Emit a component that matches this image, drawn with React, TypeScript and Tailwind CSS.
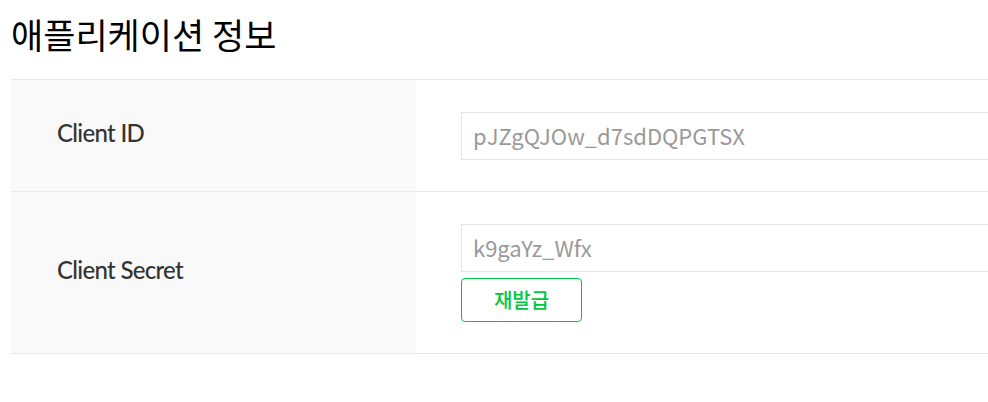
const kr = { fontFamily: '"Noto Sans CJK KR", "Noto Sans", sans-serif' };
const lato = { fontFamily: 'Lato, "Noto Sans CJK KR", sans-serif' };

interface FieldRowProps {
  label: string;
  value: string;
  action?: string;
}

function FieldRow({ label, value, action }: FieldRowProps) {
  return (
    <div className="flex border-b border-[#e8e8e8]">
      <div className="flex w-[405px] shrink-0 items-center bg-[#f9f9f9] pb-[5px] pl-[46px]">
        <span className="text-[24px] font-medium tracking-[-0.7px] text-[#333]" style={lato}>
          {label}
        </span>
      </div>
      <div className="flex-1 pt-8 pb-[31px] pl-[45px]">
        <div className="flex h-12 items-center border border-[#e5e5e5] bg-white pb-[2px] pl-[11px]">
          <span className="text-[22px] text-[#999]" style={kr}>
            {value}
          </span>
        </div>
        {action ? (
          <button
            type="button"
            className="mt-[6px] flex h-[44px] w-[121px] items-center justify-center rounded-[4px] border border-[#00c73c] bg-white text-[20px] font-medium text-[#00c73c]"
            style={kr}
          >
            {action}
          </button>
        ) : null}
      </div>
    </div>
  );
}

export default function App() {
  return (
    <div className="h-[402px] w-[988px] overflow-hidden bg-white">
      <div className="w-[1200px] pl-[11px]">
        <h2 className="pt-[11px] text-[35px] leading-[46px] text-black" style={kr}>
          애플리케이션 정보
        </h2>
        <div className="mt-[22px] border-t border-[#e8e8e8]">
          <FieldRow label="Client ID" value="pJZgQJOw_d7sdDQPGTSX" />
          <FieldRow label="Client Secret" value="k9gaYz_Wfx" action="재발급" />
        </div>
      </div>
    </div>
  );
}
